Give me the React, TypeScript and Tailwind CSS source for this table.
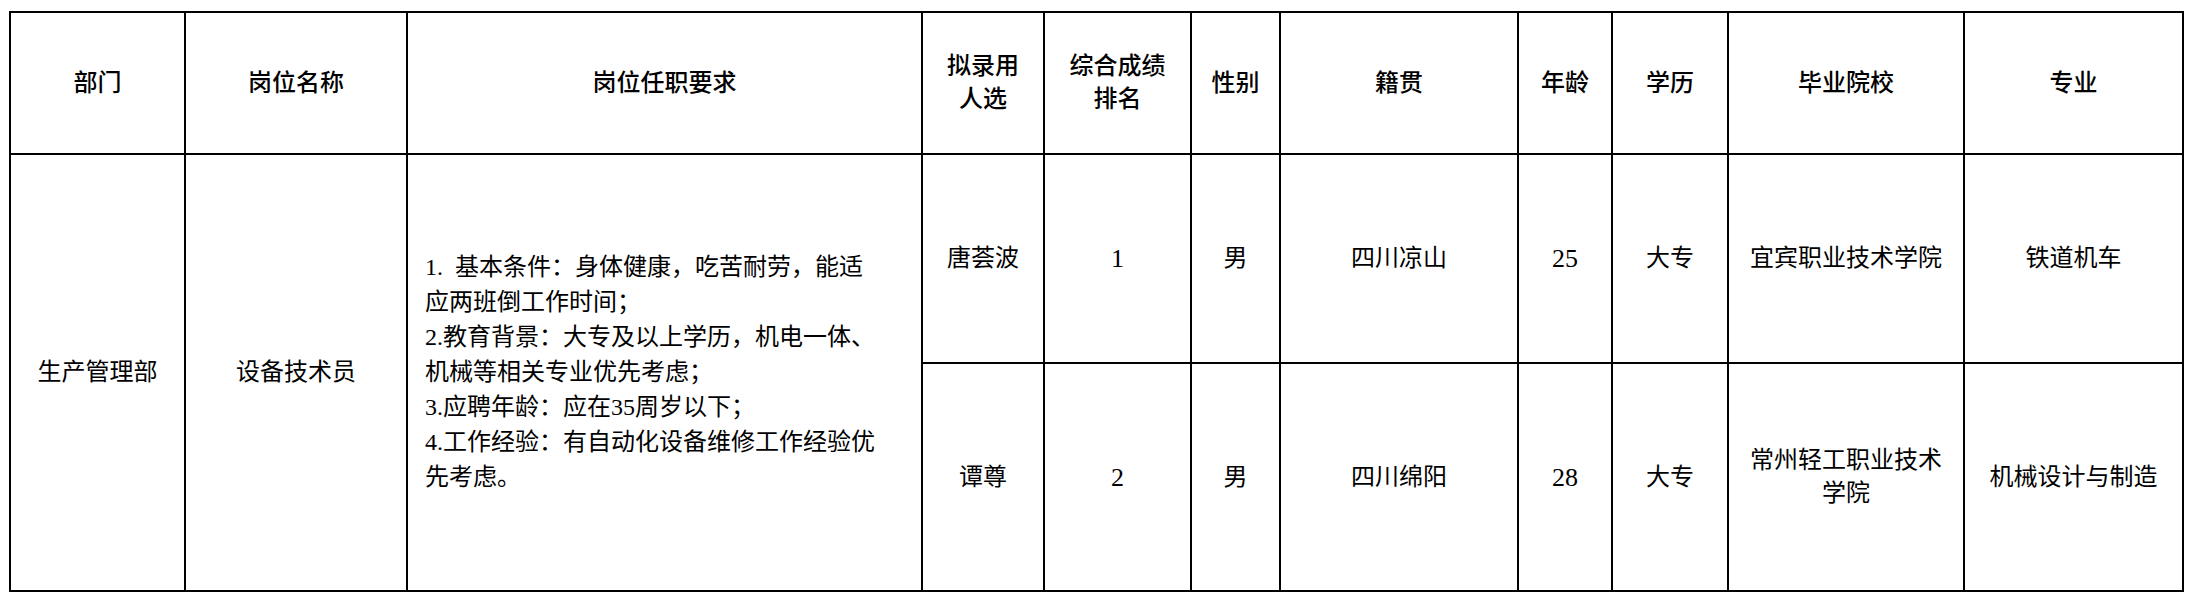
import React from 'react';

const font = "font-['Liberation_Serif','Noto_Sans_CJK_SC',serif]";

const headers: string[][] = [
    ['部门'],
    ['岗位名称'],
    ['岗位任职要求'],
    ['拟录用', '人选'],
    ['综合成绩', '排名'],
    ['性别'],
    ['籍贯'],
    ['年龄'],
    ['学历'],
    ['毕业院校'],
    ['专业'],
];

const people = [
    { name: '唐荟波', rank: '1', sex: '男', origin: '四川凉山', age: '25', edu: '大专', school: ['宜宾职业技术学院'], major: '铁道机车' },
    { name: '谭尊', rank: '2', sex: '男', origin: '四川绵阳', age: '28', edu: '大专', school: ['常州轻工职业技术', '学院'], major: '机械设计与制造' },
];

const requirements = [
    '1.  基本条件：身体健康，吃苦耐劳，能适',
    '应两班倒工作时间；',
    '2.教育背景：大专及以上学历，机电一体、',
    '机械等相关专业优先考虑；',
    '3.应聘年龄：应在35周岁以下；',
    '4.工作经验：有自动化设备维修工作经验优',
    '先考虑。',
];

const Cell = ({ lines, className = '' }: { lines: string[]; className?: string }) => (
    <div className={`bg-white flex flex-col items-center justify-center text-center ${className}`}>
        {lines.map((l, i) => (
            <span key={i} className="whitespace-nowrap">{l}</span>
        ))}
    </div>
);

const App = () => {
    return (
        <div className={`w-[2194px] h-[601px] bg-white text-black ${font}`}>
            <div className="ml-[9px] pt-[11px]">
                <div className="inline-grid bg-black p-[2px] gap-[2px] grid-cols-[173px_220px_513px_120px_145px_87px_236px_92px_114px_234px_217px] grid-rows-[140px_207px_226px] text-[24px] leading-[33px]">
                    {headers.map((h, i) => (
                        <Cell key={i} lines={h} className="font-medium" />
                    ))}

                    <Cell lines={['生产管理部']} className="row-span-2" />
                    <Cell lines={['设备技术员']} className="row-span-2" />
                    <div className="row-span-2 bg-white flex flex-col justify-center pl-[17px] leading-[35px]">
                        {requirements.map((r, i) => (
                            <span key={i} className="whitespace-pre">{r}</span>
                        ))}
                    </div>

                    {people.map((p, idx) => (
                        <React.Fragment key={idx}>
                            <Cell lines={[p.name]} />
                            <Cell lines={[p.rank]} className="text-[26px]" />
                            <Cell lines={[p.sex]} />
                            <Cell lines={[p.origin]} />
                            <Cell lines={[p.age]} className="text-[26px]" />
                            <Cell lines={[p.edu]} />
                            <Cell lines={p.school} />
                            <Cell lines={[p.major]} />
                        </React.Fragment>
                    ))}
                </div>
            </div>
        </div>
    );
};

export default App;
